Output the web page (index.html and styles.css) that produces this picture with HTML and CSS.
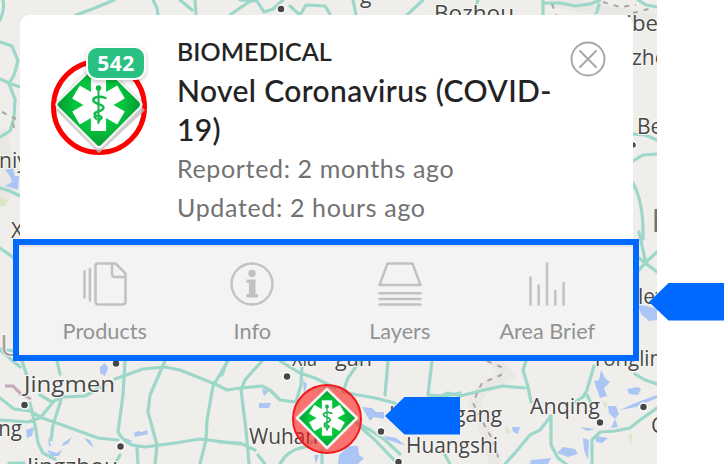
FILE: index.html
```html
<!DOCTYPE html>
<html lang="en">
<head>
<meta charset="utf-8">
<title>Event map</title>
<link rel="stylesheet" href="styles.css">
</head>
<body>
<svg width="0" height="0" class="defs" aria-hidden="true">
  <defs>
    <radialGradient id="green"><stop offset="0" stop-color="#00d23c"/><stop offset=".6" stop-color="#04c43c"/><stop offset="1" stop-color="#079a35"/></radialGradient>
    <g id="star">
      <g fill="#fff">
        <rect x="-7.6" y="-26" width="15.2" height="52"/>
        <rect x="-7.6" y="-26" width="15.2" height="52" transform="rotate(60)"/>
        <rect x="-7.6" y="-26" width="15.2" height="52" transform="rotate(-60)"/>
      </g>
      <g fill="none" stroke="#12b84a" stroke-linecap="round">
        <path d="M0-17V18" stroke-width="2"/>
        <path d="M7-7C-1-10-6-7-5-4S6-1 5 3-4 6-4 9 4 10 3 13L0 16M-4 12L-2 14" stroke-width="2.4"/>
      </g>
      <circle cy="-17" r="2.8" fill="#12b84a"/>
    </g>
  </defs>
</svg>
<main class="stage">
  <svg class="map" width="657" height="464" viewBox="0 0 657 464">
    <rect width="657" height="464" fill="#efeeea"/>
    <g class="relief">
      <path d="M495 361L507 375 482 390 474 402 485 430 496 464"/>
      <path d="M0 130L8 160 4 200"/>
      <path d="M550 0L590 8 657 20"/>
    </g>
    <g class="lakes">
      <path d="M5 170l8-2 2 8 4 0-1 14-13-4 7-4-2-6z"/>
      <path d="M100 367l5-4 3 5-3 8-5-3z"/>
      <path d="M26 430l8-3-2 9-5 2zM47 450l10 3 5-3-3 6-8 0zM63 443l9-6-4 7-6 2zM84 438l6 2 4 8-5-4zM134 433l4-2 4 1 5-2 1 4-13 3zM125 438l8 3-5 2zM48 437l3 8-2 2z"/>
      <path d="M259 403l12 0-2 5-10 0zM262 389l7 2-5 5zM303 380l4 4-3 12z"/>
      <path d="M362 407l10 1 4 4 8 0 0 7-10-2-4 4zM339 455l10-9 9 0 1 9 5 3-6 6-20 0zM384 436l12 2 9 7-5-1-14-5zM314 455l5 0-3 9z"/>
      <path d="M601 370l4 8 5 4-6 6 3 8-7 2-4-11-2-6 5-1zM627 389l11-2 3 2-3 6-9-1zM608 406l8 0 3 8-4 5 3 8-7 1 4-9-6-6zM657 395l-22 8-15 7 16-3 21-9zM512 427l8 0-2 7-5-2zM557 453l6-6 12 2 3 5-10 3zM531 460l20-2-3 6-18 0zM583 438l6 2-1 20-4-10zM596 436l12 2-6 5-6-1zM580 427l15 2-8 2z"/>
      <path d="M638 305l9 1 10 3v11l-8 1-8-7z"/>
    </g>
    <g class="greens"><path d="M0 197l9 3-5 7-4-1zM505 425l6 8-5 0zM629 434l3 0-1 13zM602 400l5 3-1 8zM595 2l6-2-3 7z"/></g>
    <g class="roads">
      <path d="M0 42L12 46 18 61 14 75 9 84 15 99 14 118 10 131 0 137M0 79L9 83 20 87M0 20Q5 10 3 0M76 15L95 8 114 0M158 15L157 8 153 0M180 0L192 10M196 15L195 0M230 15L240 8 252 0M240 0L257 1 264 12 273 9 283 0M290 6L300 15 306 5 325 6 330 14M353 0L356 15M407 15L423 0M477 3L478 0M543 15L543 0M543 3L560 3 575 6 590 4 600 0M596 15L599 5M638 0L646 5 657 7"/>
      <path d="M633 134L645 135 657 140M633 161L643 155 657 154M633 183Q644 203 643 239M639 232L645 259 M639 270L646 262 657 252M639 258L657 272"/>
      <path d="M0 188L10 191 20 196M0 248L14 258M0 349L14 351 22 361 27 376M0 350L20 367"/>
      <path d="M125 361L123 395 118 432Q122 440 132 445L145 447 175 443 200 439 240 444"/>
      <path d="M115 379L143 369 165 367 180 370 215 384 227 390 240 388 262 386 270 390 280 400 295 402"/>
      <path d="M165 361L150 395 148 412 157 445 155 464M228 361L213 386 207 420 206 440 200 464M57 361L60 374"/>
      <path d="M0 398L14 409 30 411 42 418 65 426 98 438 118 440M0 420L28 422 40 418 54 401M40 395L52 402 62 397 85 396 105 385M30 403L35 425 38 443 43 453 55 459M62 397L53 425 51 440M137 447L138 464M120 455L115 464M9 463L24 463"/>
      <path d="M262 361L245 380 241 390 246 430 249 464M220 442L240 443 255 450M227 361L222 375M280 464Q287 450 305 447L315 440M280 361L300 373 315 378 335 388M302 365L301 385 296 402M360 361L348 378 343 392 358 395 375 398 395 403M388 361L385 395M432 361L428 395 445 396 460 393M358 425L375 440 398 464M355 422L370 430 385 440 400 454M258 455L265 464M322 450L322 464"/>
      <path d="M440 397L448 393 460 396 480 391 502 386 525 388M526 361L523 370 528 387 531 402M594 366L587 390 583 397 575 402M587 395L591 403M635 374L645 380 657 384M657 408L640 420 630 428 615 431 600 432 592 440 592 464M551 416L540 430 530 435 515 453 505 464M551 416L551 445 558 458 566 464M445 455L450 464"/>
    </g>
    <path class="border" d="M487 361L501 367 501 375 482 383 478 391 473 403 487 430 493 440 499 460M552 4L556 15M603 2L620 7 636 5M633 13L652 8M2 112L16 119M13 123L15 132"/>
    <path class="rail" d="M5 386L13 386 21 394 31 399"/>
    <g class="dots">
      <circle cx="116" cy="363.500" r="4"/><circle cx="24.500" cy="405" r="4"/><circle cx="120.500" cy="446.500" r="4"/><circle cx="287" cy="376.500" r="4"/><circle cx="381" cy="431.500" r="4"/><circle cx="398.500" cy="462" r="4"/><circle cx="600" cy="422.500" r="4"/><circle cx="643.500" cy="407" r="4"/><circle cx="281" cy="9" r="4"/><circle cx="633" cy="145" r="3.500"/>
    </g>
    <g class="places">
      <text x="24" y="391.500" textLength="91" lengthAdjust="spacingAndGlyphs">Jingmen</text>
      <text x="27" y="474" textLength="91" lengthAdjust="spacingAndGlyphs">Jingzhou</text>
      <text x="-14" y="436" textLength="36" lengthAdjust="spacingAndGlyphs">ong</text>
      <text x="249" y="444" textLength="69" lengthAdjust="spacingAndGlyphs">Wuhan</text>
      <text x="292" y="366" textLength="25" lengthAdjust="spacingAndGlyphs">Xia</text>
      <text x="335" y="366" textLength="37" lengthAdjust="spacingAndGlyphs">gan</text>
      <text x="406" y="453" textLength="92" lengthAdjust="spacingAndGlyphs">Huangshi</text>
      <text x="389" y="422" textLength="113" lengthAdjust="spacingAndGlyphs">Huanggang</text>
      <text x="530" y="414" textLength="70" lengthAdjust="spacingAndGlyphs">Anqing</text>
      <text x="592" y="366" textLength="70" lengthAdjust="spacingAndGlyphs">Tonglin</text>
      <text x="434" y="21" textLength="80" lengthAdjust="spacingAndGlyphs">Bozhou</text>
      <text x="584" y="31" textLength="74" lengthAdjust="spacingAndGlyphs">Huaibe</text>
      <text x="632" y="65">zho</text>
      <text x="637" y="134">Be</text>
      <text x="651" y="433">C</text>
      <text x="638" y="304">lefei</text>
      <text x="-1" y="168">niy</text>
      <text x="11" y="238">X</text>
      <text x="0" y="356" class="region">U</text>
      <text x="360" y="3">g</text>
    </g>
    <path d="M656 209V232" stroke="#77706c" stroke-width="3"/>
  </svg>

  <section class="card">
    <div class="summary">
      <div class="emblem">
        <svg width="96" height="108" viewBox="0 0 96 108">
          <circle cx="48" cy="60" r="45.500" fill="#fff" stroke="#f00" stroke-width="5"/>
          <path d="M7 61L48 102 92 61" fill="none" stroke="#bbb" stroke-width="6" opacity=".75"/>
          <path d="M48 13Q50 13 52 15L90 54Q93 57.500 90 61L52 100Q48 104 44 100L6 61Q3 57.500 6 54L44 15Q46 13 48 13z" fill="#f4f4f4" stroke="#ccc" stroke-width=".6"/>
          <path d="M48 16L88 55Q90 57.500 88 60L50 98Q48 100 46 98L8 60Q5 57.500 8 55z" fill="url(#green)"/>
          <use href="#star" x="47.500" y="58"/>
        </svg>
        <span class="count">542</span>
      </div>
      <div class="details">
        <p class="category">BIOMEDICAL</p>
        <h1>Novel Coronavirus (COVID-<br>19)</h1>
        <p class="reported">Reported: 2 months ago</p>
        <p class="updated">Updated: 2 hours ago</p>
      </div>
      <button class="close" aria-label="Close"><svg width="36" height="36" viewBox="0 0 36 36"><g fill="none" stroke="#a8a8a8" stroke-width="2"><circle cx="18" cy="18" r="16.500"/><path d="M10 10L26 26M26 10L10 26" stroke-linecap="round"/></g></svg></button>
    </div>
    <nav class="tabs">
      <a class="tab"><svg width="44" height="44" viewBox="0 0 44 44"><path d="M1.500 9.500V35.500M6.900 7V38.500M14 1.500H32.500L42.500 11.500V39.500Q42.500 42.500 39.500 42.500H15.500Q12.500 42.500 12.500 39.500V3.500Q12.500 1.500 14.500 1.500M29 2V12Q29 15 32 15H42"/></svg><span>Products</span></a>
      <a class="tab"><svg width="44" height="44" viewBox="0 0 44 44"><circle cx="22" cy="22" r="20.500" stroke-width="2.400"/><circle cx="22" cy="11.500" r="3.700" fill="#c1c1c1" stroke="none"/><path d="M16.500 17.500H25.500V32H28V35.500H16.500V32H19V21H16.500z" fill="#c1c1c1" stroke="none"/></svg><span>Info</span></a>
      <a class="tab"><svg width="44" height="44" viewBox="0 0 44 44"><path d="M9.500 1.500H34.500L42.500 23H1.500zM1.500 31.300H42.500M1.500 37H42.500M1.500 42.500H42.500"/></svg><span>Layers</span></a>
      <a class="tab"><svg width="44" height="44" viewBox="0 0 44 44"><path d="M5.500 15.500V42.500M13.700 23.500V42.500M22 1.500V42.500M30.300 29V42.500M38.600 21V42.500"/></svg><span>Area Brief</span></a>
    </nav>
  </section>

  <svg class="marker" width="72" height="72" viewBox="0 0 72 72">
    <circle cx="36" cy="36" r="34" fill="#ff1818" fill-opacity=".58" stroke="#f3191d" stroke-width="2"/>
    <path d="M36 6L66 35 36 65 6 35z" fill="url(#green)" stroke="#f2f2f2" stroke-width="2.500" stroke-linejoin="round"/>
    <use href="#star" transform="translate(36 35) scale(.68)"/>
  </svg>
  <svg class="arrow arrow-tabs" width="75" height="38" viewBox="0 0 75 38"><path d="M0 19L19.500 0H75V37.500H19.500z"/></svg>
  <svg class="arrow arrow-marker" width="75" height="38" viewBox="0 0 75 38"><path d="M0 19L19.500 0H75V37.500H19.500z"/></svg>
</main>
</body>
</html>
```
FILE: styles.css
```css
* { box-sizing: border-box; }
body { margin: 0; background: #fff; font-family: Lato, sans-serif; }
.defs { position: absolute; }
.stage { position: relative; width: 724px; height: 464px; overflow: hidden; padding: 15px 91px 0 20px; }
.map { position: absolute; left: 0; top: 0; }
.roads { fill: none; stroke: #9cd7ca; stroke-width: 3.2; stroke-linejoin: round; stroke-linecap: round; }
.lakes { fill: #abc6f4; }
.greens { fill: #dce7c5; }
.relief { fill: none; stroke: #e9e8e5; stroke-width: 12; }
.border { fill: none; stroke: #aaa7a5; stroke-width: 2; stroke-dasharray: 5 6; }
.rail { fill: none; stroke: #c5a9bb; stroke-width: 3; }
.dots { fill: #484848; stroke: #fff; stroke-width: 1.5; }
.places { font: 500 21px "Open Sans", "Noto Sans", sans-serif; fill: #484848; stroke: #f7f6f3; stroke-width: 2px; paint-order: stroke; }
.places .region { font-size: 30px; fill: #aaa09c; }
.card { position: relative; width: 613px; height: 340px; border-radius: 10px 10px 0 0; background: #fff; }
.summary { display: flex; height: 230px; padding: 17px 27px 0 31px; }
.emblem { position: relative; width: 126px; height: 108px; margin-top: 15px; }
.emblem svg { display: block; }
.count { position: absolute; left: 35px; top: -1px; width: 60px; height: 34px; border: 2px solid #fff; border-radius: 11px; background: #28c182; box-shadow: 0 2px 4px rgba(0, 0, 0, .22); color: #fff; font: 700 21px/30px "Open Sans", sans-serif; letter-spacing: .5px; text-align: center; }
.details { width: 393px; white-space: nowrap; color: #222; line-height: 39px; }
.details p, .details h1 { margin: 0; }
.category { font-size: 25px; font-weight: 500; letter-spacing: .1px; -webkit-text-stroke: .2px #222; }
.details h1 { font-size: 30px; font-weight: 500; letter-spacing: .38px; -webkit-text-stroke: .1px #222; }
.reported, .updated { color: #727272; font-size: 25px; letter-spacing: .65px; }
.close { width: 36px; height: 36px; margin: 8.500px 0 0 0; padding: 0; border: 0; background: none; }
.close svg { display: block; }
.tabs { display: flex; height: 122px; margin: -6px -6px 0 -7px; padding: 0 12px; border: 6px solid #0069ff; background: #f3f3f3; box-shadow: inset 0 2px #e5e5e5; }
.tab { flex: 1; display: flex; flex-direction: column; align-items: center; padding-top: 17px; color: #929292; font-size: 21.700px; line-height: 28px; white-space: nowrap; }
.tab svg { fill: none; stroke: #c1c1c1; stroke-width: 2.5; stroke-linecap: round; stroke-linejoin: round; }
.tab span { margin-top: 11px; }
.marker { position: absolute; left: 291px; top: 383px; }
.arrow { position: absolute; fill: #0069ff; }
.arrow-tabs { left: 649px; top: 283px; }
.arrow-marker { left: 385px; top: 397px; }
```
